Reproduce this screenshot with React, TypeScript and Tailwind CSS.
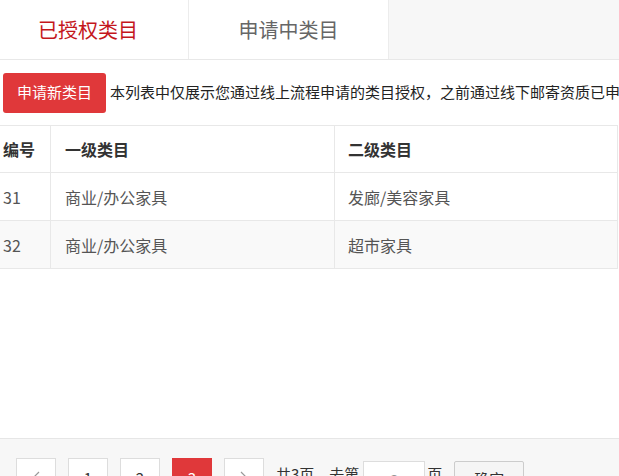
import React from "react";

const rows = [
  { id: 31, first: "商业/办公家具", second: "发廊/美容家具" },
  { id: 32, first: "商业/办公家具", second: "超市家具" },
];

export default function App() {
  return (
    <div className="w-full h-[476px] overflow-hidden bg-white font-['Noto_Sans_CJK_SC','Noto_Sans',sans-serif]">
      <div className="-ml-3 w-[631px] flex flex-col">
        {/* tabs */}
        <div className="h-[60px] flex bg-[#f7f7f7] border-b border-[#e8e8e8] shrink-0">
          <div className="w-[200px] bg-white flex items-center justify-center text-[20px] text-[#c4161c]">
            已授权类目
          </div>
          <div className="w-[201px] bg-white border-x border-[#ececec] flex items-center justify-center text-[20px] text-[#666]">
            申请中类目
          </div>
        </div>

        {/* toolbar */}
        <div className="h-[65px] flex items-center pl-[15px] shrink-0">
          <button className="h-10 px-[14px] bg-[#e0383a] rounded-[3px] text-white text-[15px] shrink-0">
            申请新类目
          </button>
          <span className="ml-1 text-[15px] text-[#222] whitespace-nowrap">
            本列表中仅展示您通过线上流程申请的类目授权，之前通过线下邮寄资质已申请的类目不在此列表中展示
          </span>
        </div>

        {/* table */}
        <div className="w-[630px] border-t border-r border-[#e8e8e8] shrink-0">
          <div className="grid grid-cols-[63px_284px_282px] h-[47px] border-b border-[#e8e8e8] text-[16px] font-bold text-[#333]">
            <div className="pl-[15px] flex items-center border-r border-[#e8e8e8]">编号</div>
            <div className="pl-[14px] flex items-center border-r border-[#e8e8e8]">一级类目</div>
            <div className="pl-[13px] flex items-center">二级类目</div>
          </div>
          {rows.map((r, i) => (
            <div
              key={r.id}
              className={
                "grid grid-cols-[63px_284px_282px] h-[48px] border-b border-[#e8e8e8] text-[16px] text-[#555] " +
                (i % 2 === 1 ? "bg-[#f9f9f9]" : "bg-white")
              }
            >
              <div className="pl-[15px] flex items-center border-r border-[#e8e8e8]">{r.id}</div>
              <div className="pl-[14px] flex items-center border-r border-[#e8e8e8]">{r.first}</div>
              <div className="pl-[13px] flex items-center">{r.second}</div>
            </div>
          ))}
        </div>

        <div className="h-[169px] shrink-0" />

        {/* pagination */}
        <div className="h-[80px] bg-[#f7f7f7] border-t border-[#e6e6e6] pt-[19px] pl-[28px] flex items-start gap-3 text-[15px] text-[#333] shrink-0">
          <button className="w-10 h-10 border border-[#ddd] bg-white text-[#999] flex items-center justify-center">
            <svg width="10" height="14" viewBox="0 0 10 14" fill="none" stroke="#999" strokeWidth="1.2">
              <path d="M8 1L2 7l6 6" />
            </svg>
          </button>
          <button className="w-10 h-10 border border-[#ddd] bg-white">1</button>
          <button className="w-10 h-10 border border-[#ddd] bg-white">2</button>
          <button className="w-10 h-10 border border-[#e0383a] bg-[#e0383a] text-white">3</button>
          <button className="w-10 h-10 border border-[#ddd] bg-white flex items-center justify-center">
            <svg width="10" height="14" viewBox="0 0 10 14" fill="none" stroke="#999" strokeWidth="1.2">
              <path d="M2 1l6 6-6 6" />
            </svg>
          </button>
          <div className="flex items-start pt-[5px]">
            <span className="whitespace-nowrap">共3页，去第</span>
          </div>
          <div className="flex items-start -ml-2 pt-[3px]">
            <input
              readOnly
              value="3"
              className="w-[62px] h-9 border border-[#ddd] bg-white text-center text-[#999] text-[15px] outline-none"
            />
            <span className="ml-[2px] pt-[2px]">页</span>
          </div>
          <button className="mt-[3px] w-[70px] h-9 border border-[#ccc] bg-[#f5f5f5] rounded-[2px] text-[#333]">
            确定
          </button>
        </div>
      </div>
    </div>
  );
}
